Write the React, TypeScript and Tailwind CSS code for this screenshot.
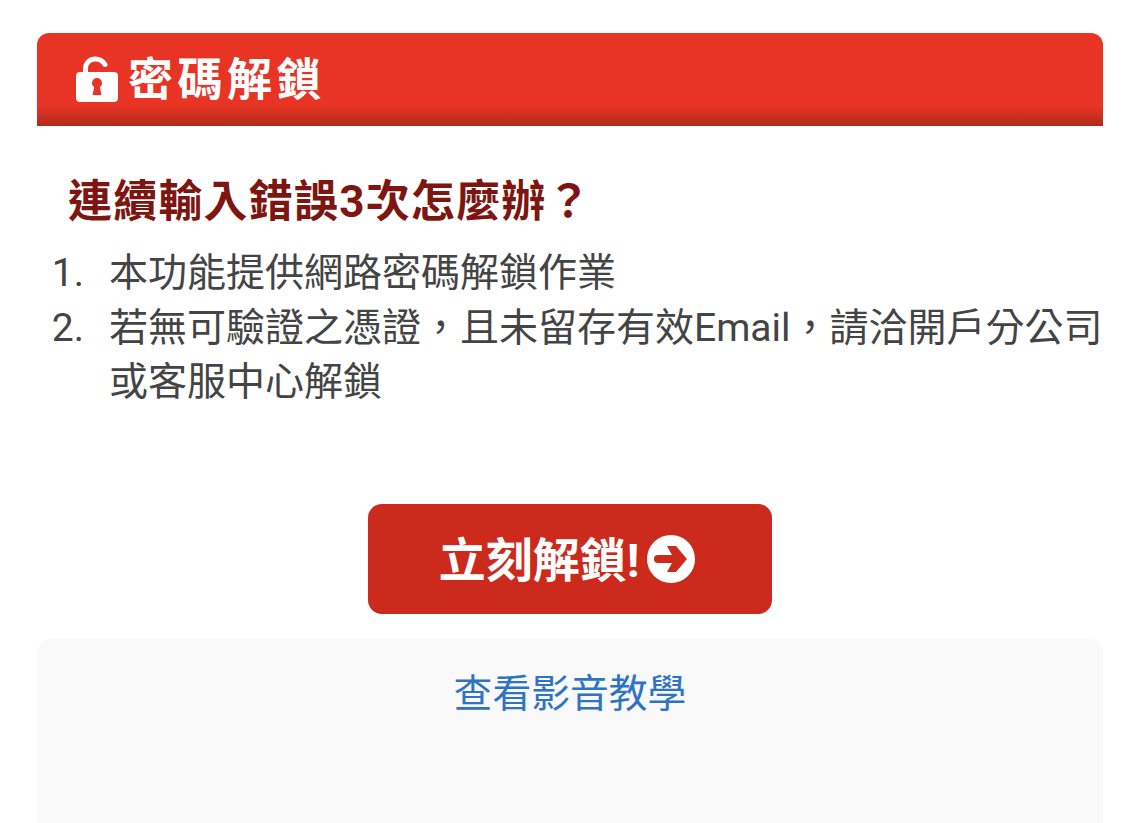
import React from 'react';

const cjk = "font-['Roboto','Noto_Sans_CJK_TC',sans-serif]";

const steps = [
  '本功能提供網路密碼解鎖作業',
  '若無可驗證之憑證\uFF0C且未留存有效Email\uFF0C請洽開戶分公司或客服中心解鎖',
];

const OpenLock = () => (
  <svg viewBox="0 0 44 46" className="w-[44px] h-[46px] shrink-0" aria-hidden="true">
    <path d="M9.500 20v-7C9.500 6.500 14 3 19.500 3c4 0 7.500 2 9.500 5.500" fill="none" stroke="#fff" strokeWidth="5" strokeLinecap="round" />
    <path
      fillRule="evenodd"
      fill="#fff"
      d="M4 16h34a4 4 0 0 1 4 4v22a4 4 0 0 1-4 4H4a4 4 0 0 1-4-4V20a4 4 0 0 1 4-4zM21 22a5 5 0 0 0-2.800 9.100L16.500 39h9l-1.700-7.900A5 5 0 0 0 21 22z"
    />
  </svg>
);

const ArrowCircle = () => (
  <svg viewBox="0 0 48 48" className="w-[48px] h-[48px] shrink-0" aria-hidden="true">
    <circle cx="24" cy="24" r="24" fill="#fff" />
    <path d="M11 20h14l-5-9h9l11 13-11 13h-9l5-9H11a4 4 0 0 1 0-8z" fill="#cc2a1c" />
  </svg>
);

export default function App() {
  return (
    <div className={`h-[823px] overflow-hidden bg-white pl-[37px] pr-[28px] pt-[33px] ${cjk}`}>
      {/* Header */}
      <div className="h-[93px] rounded-t-[12px] bg-[linear-gradient(to_bottom,#e83425_0%,#e83425_78%,#b22a1d_100%)] flex items-center pl-[39px] pb-[1px] gap-[8px]">
        <OpenLock />
        <h1 className="text-[45px] font-bold text-white tracking-[4.500px] leading-none pt-[3px]">密碼解鎖</h1>
      </div>

      {/* Help text */}
      <h2 className="mt-[50px] pl-[31px] text-[44px] leading-[52px] font-bold text-[#7d1610] tracking-[1.200px]">
        連續輸入錯誤3次怎麼辦{'\uFF1F'}
      </h2>
      <ol className="mt-[18px] text-[39px] leading-[54.500px] text-[#444444]">
        {steps.map((step, i) => (
          <li key={i} className="flex">
            <span className="w-[47px] shrink-0 text-right">{i + 1}.</span>
            <span className="ml-[25px]">{step}</span>
          </li>
        ))}
      </ol>

      {/* CTA */}
      <div className="mt-[94px] flex justify-center">
        <button className="w-[404px] h-[110px] rounded-[14px] bg-[#cc2a1c] flex items-center justify-center gap-[8px] pr-[6px] text-white text-[47px] font-bold">
          <span className="pt-[5px]">立刻解鎖!</span>
          <ArrowCircle />
        </button>
      </div>

      {/* Video link panel */}
      <div className="mt-[25px] h-[300px] rounded-[14px] bg-[#f9f9f9] pt-[28px] text-center">
        <a className="text-[38.800px] leading-[54px] text-[#2f74c4]">查看影音教學</a>
      </div>
    </div>
  );
}
